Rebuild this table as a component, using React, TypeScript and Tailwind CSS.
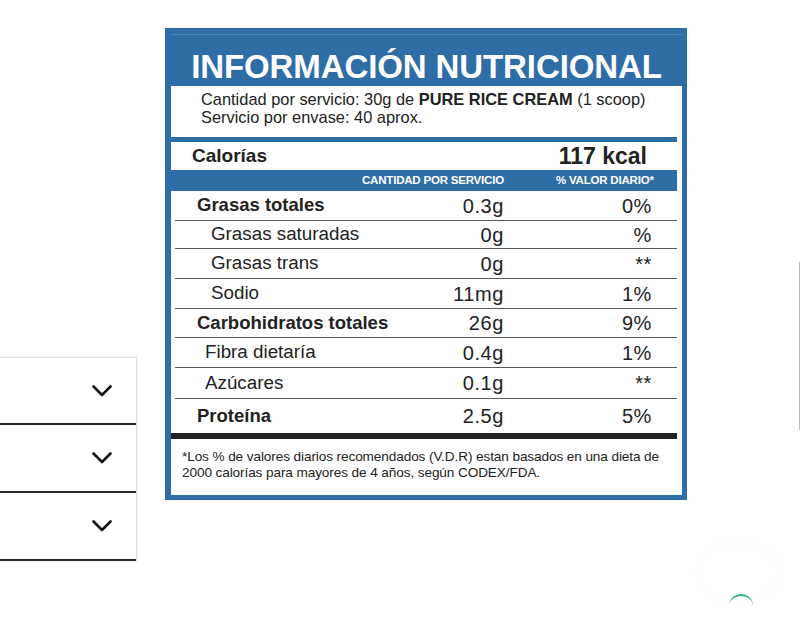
import React from "react";

const rows = [
  { name: "Grasas totales", bold: true, pad: "pl-[22px]", amt: "0.3g", pct: "0%", h: "h-[30px]", line: true },
  { name: "Grasas saturadas", bold: false, pad: "pl-[36px]", amt: "0g", pct: "%", h: "h-[28px]", line: true },
  { name: "Grasas trans", bold: false, pad: "pl-[36px]", amt: "0g", pct: "**", h: "h-[30px]", line: true },
  { name: "Sodio", bold: false, pad: "pl-[36px]", amt: "11mg", pct: "1%", h: "h-[30px]", line: true },
  { name: "Carbohidratos totales", bold: true, pad: "pl-[22px]", amt: "26g", pct: "9%", h: "h-[29px]", line: true },
  { name: "Fibra dietaría", bold: false, pad: "pl-[30px]", amt: "0.4g", pct: "1%", h: "h-[30px]", line: true },
  { name: "Azúcares", bold: false, pad: "pl-[30px]", amt: "0.1g", pct: "**", h: "h-[31px]", line: true },
  { name: "Proteína", bold: true, pad: "pl-[22px]", amt: "2.5g", pct: "5%", h: "h-[34px]", line: false },
];

function Chevron() {
  return (
    <svg width="20" height="12" viewBox="0 0 20 12" fill="none">
      <polyline points="1.5,1.5 10,10 18.5,1.5" stroke="#111" strokeWidth="2.6" strokeLinecap="round" strokeLinejoin="round" />
    </svg>
  );
}

export default function App() {
  return (
    <div className="relative w-[800px] h-[624px] bg-white overflow-hidden text-[#222]" style={{ fontFamily: '"Liberation Sans", Arial, sans-serif' }}>
      <div className="flex items-start">
        {/* Left accordion */}
        <div className="mt-[357px] w-[137px] border-t border-r border-[#e2e2e2] shadow-[0_0_3px_rgba(0,0,0,0.08)]">
          {[0, 1, 2].map((i) => (
            <div key={i} className={`${i === 0 ? "h-[67px]" : "h-[68px]"} flex items-center justify-end pr-[24px] border-b-2 border-[#2a2a2a]`}>
              <Chevron />
            </div>
          ))}
        </div>

        {/* Nutrition label */}
        <div className="ml-[28px] mt-[28px] w-[522px] bg-[#2f6da6] pl-[6px] pr-[5px] pb-[5px]">
          <div className="mt-[6px] h-[52px] flex items-end justify-center pb-[3px] border-t border-[#4a86bd]">
            <span className="text-white font-bold text-[33px] leading-none tracking-[-0.1px]">INFORMACIÓN NUTRICIONAL</span>
          </div>
          <div className="bg-white">
            <div className="h-[51px] pl-[30px] pt-[4px] text-[16.4px] leading-[18px] tracking-[0px] text-[#222]">
              <div className="whitespace-nowrap">
                Cantidad por servicio: 30g de <b>PURE RICE CREAM</b> (1 scoop)
              </div>
              <div>Servicio por envase: 40 aprox.</div>
            </div>
            <div className="h-[5px] bg-[#2f6da6] mr-[5px]" />
            <div className="h-[28px] flex items-center justify-between pl-[21px] pr-[35px]">
              <span className="font-bold text-[19px]">Calorías</span>
              <span className="font-bold text-[23px]">117 kcal</span>
            </div>
            <div className="h-[21px] bg-[#2f6da6] mr-[5px] flex items-center text-white font-bold text-[11.5px] tracking-[-0.2px]">
              <span className="ml-[191px]">CANTIDAD POR SERVICIO</span>
              <span className="ml-[52px]">% VALOR DIARIO*</span>
            </div>
            <div className="ml-[4px] mr-[5px]">
              {rows.map((r) => (
                <div
                  key={r.name}
                  className={`grid grid-cols-[209px_120px_148px] items-center ${r.h} ${r.line ? "border-b border-[#5a5a5a]" : ""}`}
                >
                  <span className={`${r.pad} ${r.bold ? "font-bold text-[18.5px]" : "text-[18.8px]"} leading-none whitespace-nowrap`}>{r.name}</span>
                  <span className="text-right text-[20px] leading-none tracking-[0.6px]">{r.amt}</span>
                  <span className="text-right text-[20px] leading-none tracking-[0.6px]">{r.pct}</span>
                </div>
              ))}
            </div>
            <div className="h-[6px] bg-[#222] mr-[5px]" />
            <div className="h-[56px] pl-[11px] pt-[10px] text-[13.6px] leading-[16px] tracking-[-0.1px] text-[#222]">
              <div className="whitespace-nowrap">*Los % de valores diarios recomendados (V.D.R) estan basados en una dieta de</div>
              <div>2000 calorías para mayores de 4 años, según CODEX/FDA.</div>
            </div>
          </div>
        </div>
      </div>

      {/* right edge partial element */}
      <div className="absolute left-[799px] top-[262px] w-[1px] h-[168px] bg-[#bbb]" />
      {/* floating button hint */}
      <div className="absolute left-[700px] top-[548px] w-[76px] h-[48px] rounded-[24px] shadow-[0_0_14px_rgba(0,0,0,0.02)]" />
      <div className="absolute left-[729px] top-[594px] w-[24px] h-[24px] rounded-full border-t-2 border-[#2eb67d]" />
    </div>
  );
}
